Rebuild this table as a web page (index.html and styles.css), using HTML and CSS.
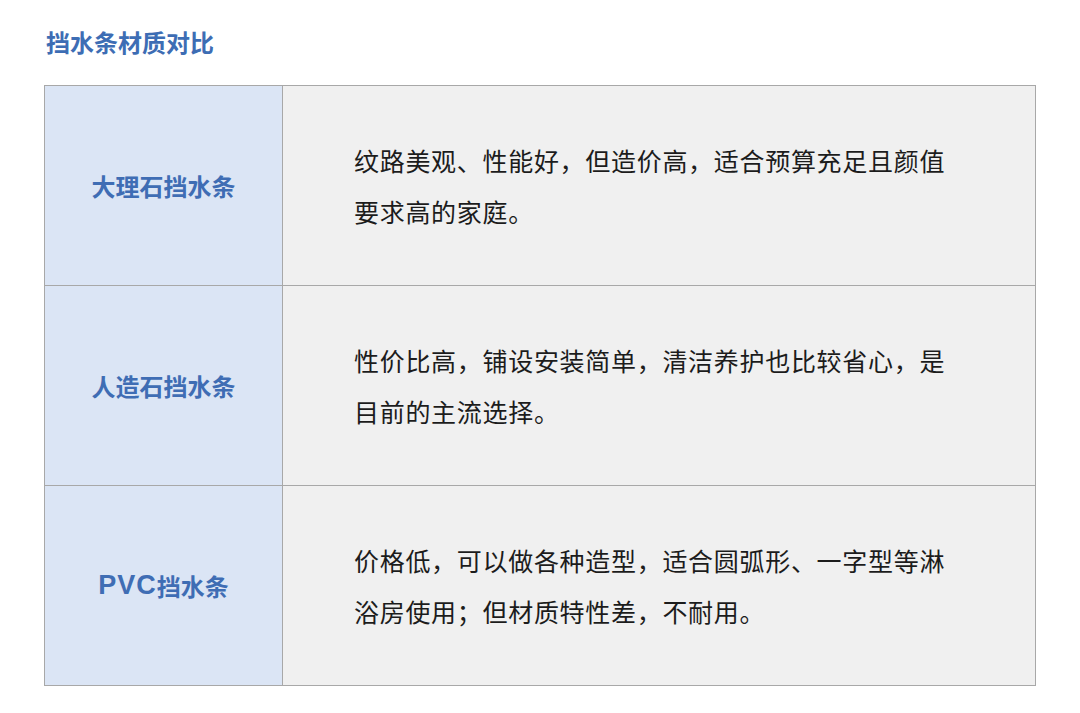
FILE: index.html
```html
<!DOCTYPE html>
<html lang="zh">
<head>
<meta charset="utf-8">
<link rel="stylesheet" href="styles.css">
</head>
<body>
<div class="page">
  <h1 class="title">挡水条材质对比</h1>
  <div class="table">
    <div class="row">
      <div class="label">大理石挡水条</div>
      <div class="desc">纹路美观、性能好，但造价高，适合预算充足且颜值要求高的家庭。</div>
    </div>
    <div class="row">
      <div class="label">人造石挡水条</div>
      <div class="desc">性价比高，铺设安装简单，清洁养护也比较省心，是目前的主流选择。</div>
    </div>
    <div class="row">
      <div class="label"><span class="latin">PVC</span>挡水条</div>
      <div class="desc">价格低，可以做各种造型，适合圆弧形、一字型等淋浴房使用；但材质特性差，不耐用。</div>
    </div>
  </div>
</div>
</body>
</html>
```

FILE: styles.css
```css
html, body {
  margin: 0;
  padding: 0;
  background: #ffffff;
}
body {
  font-family: "Liberation Sans", "Noto Sans CJK SC", sans-serif;
  color: #1c1c1c;
}
.page {
  padding: 27px 44px 0 44px;
  width: 992px;
}
.title {
  margin: 0 0 0 2px;
  font-size: 24px;
  line-height: 34px;
  font-weight: 700;
  color: #3d6db4;
  height: 58px;
}
.table {
  display: flex;
  flex-direction: column;
  border: 1px solid #a8a8a8;
  width: 990px;
}
.row {
  display: grid;
  grid-template-columns: 238px 1fr;
  height: 199px;
  border-bottom: 1px solid #a8a8a8;
}
.row:last-child {
  height: 199px;
  border-bottom: none;
}
.label {
  background: #dbe5f5;
  border-right: 1px solid #a8a8a8;
  display: flex;
  align-items: center;
  justify-content: center;
  font-size: 24px;
  font-weight: 700;
  color: #3f6db4;
}
.latin {
  font-size: 27px;
  letter-spacing: 1px;
}
.desc {
  background: #f0f0f0;
  display: flex;
  align-items: center;
  padding: 4px 76px 0 71px;
  font-size: 25px;
  letter-spacing: 0.7px;
  line-height: 51px;
}
```
